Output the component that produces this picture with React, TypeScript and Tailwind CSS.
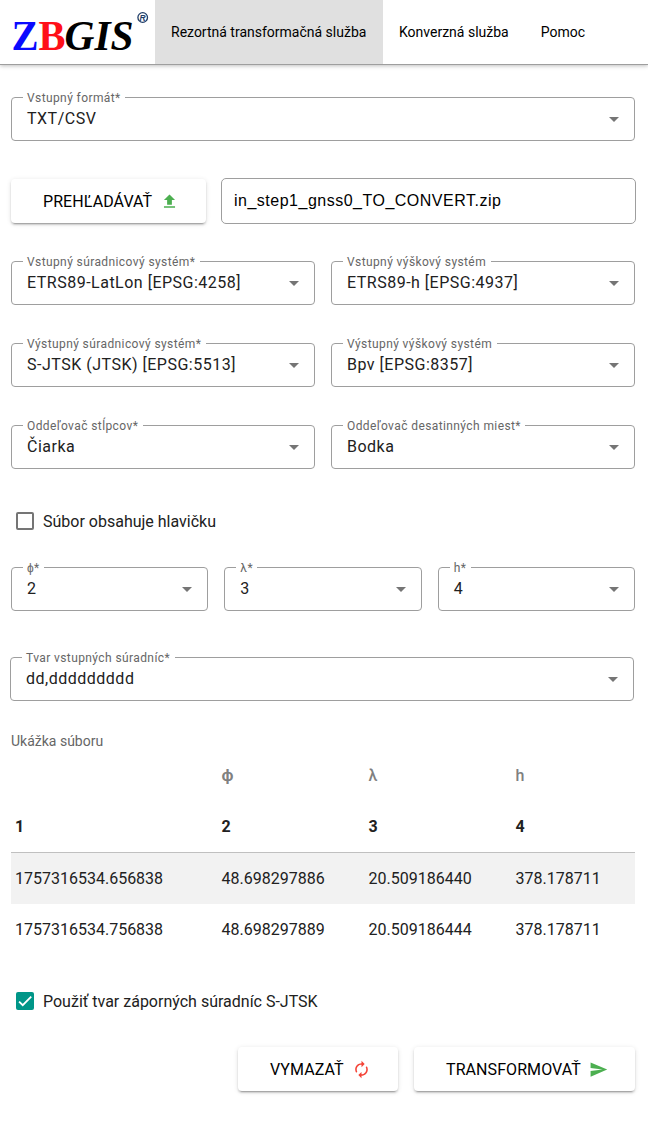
import type { ReactNode } from "react";
import { MdAutorenew, MdFileUpload, MdSend } from "react-icons/md";

interface SelectFieldProps {
  label: string;
  value: string;
  className?: string;
}

function SelectField({ label, value, className = "" }: SelectFieldProps) {
  return (
    <fieldset
      className={`h-11 min-w-0 rounded-[4px] border border-[#9e9e9e] pl-[11px] pr-[15px] ${className}`}
    >
      <legend className="h-px whitespace-nowrap pl-1 pr-[4.500px] text-xs leading-[2px] tracking-[0.400px] text-[#666]">
        {label}
      </legend>
      <div className="flex h-[42px] items-center justify-between pl-1">
        <span className="text-base leading-6 tracking-[0.5px] text-[#212121]">{value}</span>
        <svg className="mt-px h-[5px] w-2.5" viewBox="0 0 10 5" fill="#757575">
          <path d="M0 0h10L5 5z" />
        </svg>
      </div>
    </fieldset>
  );
}

function RaisedButton({ children, className = "" }: { children: ReactNode; className?: string }) {
  return (
    <button
      className={`flex h-11 items-center rounded-[4px] bg-white pl-8 pt-px text-base tracking-[0.080px] text-black shadow-[0_3px_1px_-2px_rgba(0,0,0,0.2),0_2px_2px_0_rgba(0,0,0,0.14),0_1px_5px_0_rgba(0,0,0,0.12)] ${className}`}
    >
      {children}
    </button>
  );
}

function Checkbox({ label, checked = false }: { label: string; checked?: boolean }) {
  return (
    <label className="flex h-6 items-center gap-[9px] pl-[5px] text-base text-[#212121]">
      {checked ? (
        <span className="flex size-[18px] items-center justify-center rounded-[2px] bg-[#009688]">
          <svg className="size-[18px]" viewBox="0 0 24 24" fill="none" stroke="white" strokeWidth="2.4">
            <path d="M4.1 12.7 9 17.6 20.3 6.3" />
          </svg>
        </span>
      ) : (
        <span className="size-[18px] rounded-[2px] border-2 border-[#757575]" />
      )}
      <span className="pt-0.5">{label}</span>
    </label>
  );
}

const rows = [
  ["1757316534.656838", "48.698297886", "20.509186440", "378.178711"],
  ["1757316534.756838", "48.698297889", "20.509186444", "378.178711"],
];

export default function App() {
  return (
    <div className="min-h-[1126px] w-[648px] bg-white font-[Roboto,sans-serif]">
      <header className="flex h-[65px] border-b border-[#9e9e9e] text-sm text-black shadow-[0_1px_4px_rgba(0,0,0,0.25)]">
        <div className="w-[155px]">
          <svg className="h-16 w-[155px]" viewBox="0 0 155 64">
            <g fontFamily="Liberation Serif, serif" fontWeight="700" fontSize="42">
              <text x="11.500" y="50" fill="#0a0aff" textLength="27" lengthAdjust="spacingAndGlyphs">Z</text>
              <text x="38.500" y="50" fill="#ff1018" textLength="27" lengthAdjust="spacingAndGlyphs">B</text>
              <text x="64.500" y="50" fill="#000" fontStyle="italic" textLength="69" lengthAdjust="spacingAndGlyphs">GIS</text>
            </g>
            <circle cx="142.700" cy="17.500" r="4.800" fill="none" stroke="#1f3d68" strokeWidth="1.300" />
            <text x="139.600" y="20.600" fill="#1f3d68" fontFamily="Liberation Sans, sans-serif" fontWeight="700" fontStyle="italic" fontSize="8.500">R</text>
          </svg>
        </div>
        <nav className="flex items-stretch">
          <a className="flex w-[228px] items-center bg-[#e0e0e0] pl-4">Rezortná transformačná služba</a>
          <a className="flex items-center px-4">Konverzná služba</a>
          <a className="flex items-center px-4">Pomoc</a>
        </nav>
      </header>

      <main className="pl-[11px] pr-[13px] pt-8">
        <SelectField label="Vstupný formát*" value="TXT/CSV" />

        <div className="-mr-px mt-[37px] flex items-center gap-[15px]">
          <RaisedButton className="w-[195px] gap-2">
            PREHĽADÁVAŤ
            <MdFileUpload className="size-[19px] text-[#4caf50]" />
          </RaisedButton>
          <div className="flex h-[46px] flex-1 items-center rounded-[5px] border border-[#9e9e9e] px-3 font-['Liberation_Sans',sans-serif] text-base tracking-[0.5px] text-black">
            in_step1_gnss0_TO_CONVERT.zip
          </div>
        </div>

        <div className="mt-[37px] grid grid-cols-2 gap-x-4 gap-y-[38px]">
          <SelectField label="Vstupný súradnicový systém*" value="ETRS89-LatLon [EPSG:4258]" />
          <SelectField label="Vstupný výškový systém" value="ETRS89-h [EPSG:4937]" />
          <SelectField label="Výstupný súradnicový systém*" value="S-JTSK (JTSK) [EPSG:5513]" />
          <SelectField label="Výstupný výškový systém" value="Bpv [EPSG:8357]" />
          <SelectField label="Oddeľovač stĺpcov*" value="Čiarka" />
          <SelectField label="Oddeľovač desatinných miest*" value="Bodka" />
        </div>

        <div className="mt-10">
          <Checkbox label="Súbor obsahuje hlavičku" />
        </div>

        <div className="mt-[34px] grid grid-cols-3 gap-4">
          <SelectField label="ϕ*" value="2" />
          <SelectField label="λ*" value="3" />
          <SelectField label="h*" value="4" />
        </div>

        <SelectField
          label="Tvar vstupných súradníc*"
          value="dd,ddddddddd"
          className="-ml-px mr-px mt-[46px]"
        />

        <p className="mt-[30px] text-sm leading-5 text-[#666]">Ukážka súboru</p>
        <table className="w-full table-fixed border-separate border-spacing-0 text-left text-base text-[#212121]">
          <colgroup>
            <col className="w-[206.500px]" />
            <col className="w-[147px]" />
            <col className="w-[147px]" />
            <col />
          </colgroup>
          <thead>
            <tr className="h-[50px] text-[#808080]">
              {["", "ϕ", "λ", "h"].map((name, i) => (
                <th key={i} className="px-1 py-0 font-medium first-of-type:w-auto nth-2:font-bold">{name}</th>
              ))}
            </tr>
            <tr className="h-[52px]">
              {[1, 2, 3, 4].map((n) => (
                <th key={n} className="border-b border-[#c0c0c0] px-1 py-0 font-bold">{n}</th>
              ))}
            </tr>
          </thead>
          <tbody>
            {rows.map((row, i) => (
              <tr key={i} className="h-[51px] odd:bg-[#f2f2f2]">
                {row.map((cell, j) => (
                  <td key={j} className="px-1 py-0">{cell}</td>
                ))}
              </tr>
            ))}
          </tbody>
        </table>

        <div className="mt-[34px]">
          <Checkbox checked label="Použiť tvar záporných súradníc S-JTSK" />
        </div>

        <div className="mt-[34px] flex justify-end gap-4">
          <RaisedButton className="w-[160px] gap-2">
            VYMAZAŤ
            <MdAutorenew className="size-[19px] text-[#f44336]" />
          </RaisedButton>
          <RaisedButton className="w-[221px] gap-2">
            TRANSFORMOVAŤ
            <MdSend className="size-[19px] text-[#4caf50]" />
          </RaisedButton>
        </div>
      </main>
    </div>
  );
}
